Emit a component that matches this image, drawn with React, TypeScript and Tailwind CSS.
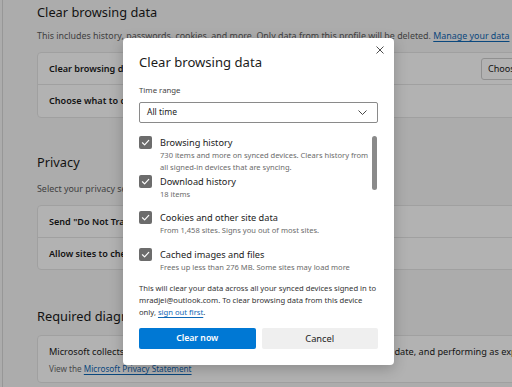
import React from "react";

function Check() {
  return (
    <div className="w-[13px] h-[13px] shrink-0 rounded-[2px] bg-[#6c6c6c] flex items-center justify-center">
      <svg width="9" height="9" viewBox="0 0 10 10" fill="none">
        <path d="M1.6 5.3 L4 7.6 L8.6 2.6" stroke="#fff" strokeWidth="1.3" strokeLinecap="round" strokeLinejoin="round" />
      </svg>
    </div>
  );
}

function Item({ label, desc, className }: { label: string; desc: string[]; className?: string }) {
  return (
    <div className={"flex gap-[8px] " + (className ?? "")}>
      <Check />
      <div>
        <div className="text-[9.2px] leading-[13px] text-[#1b1b1b] whitespace-nowrap">{label}</div>
        {desc.map((d) => (
          <div key={d} className="text-[7.55px] leading-[12px] text-[#6b6b6b] whitespace-nowrap">
            {d}
          </div>
        ))}
      </div>
    </div>
  );
}

export default function App() {
  return (
    <div className="relative w-[512px] h-[387px] overflow-hidden bg-[#f7f7f7] font-['Noto_Sans',sans-serif]">
      {/* page */}
      <div className="flex h-full">
        <div className="w-[3px] shrink-0 border-r border-[#d9d9d9]" />
        <div className="pl-[34px] w-[600px] shrink-0">
          <h1 className="pt-[2px] text-[12.8px] leading-[20px] text-[#1b1b1b]">Clear browsing data</h1>
          <p className="mt-[8px] text-[8.9px] leading-[12px] text-[#5c5c5c] whitespace-nowrap">
            This includes history, passwords, cookies, and more. Only data from this profile will be deleted.{" "}
            <span className="text-[#0f67b5] underline underline-offset-2">Manage your data</span>
          </p>
          <div className="mt-[10px] bg-white rounded-[4px] border border-[#e6e6e6]">
            <div className="h-[32px] flex items-center px-[11px] border-b border-[#e6e6e6]">
              <span className="w-[432px] shrink-0 text-[9.1px] font-semibold text-[#1b1b1b]">Clear browsing data now</span>
              <span className="h-[22px] px-[6px] flex items-center border border-[#cfcfcf] rounded-[3px] text-[9.1px] text-[#1b1b1b] whitespace-nowrap">
                Choose what to clear
              </span>
            </div>
            <div className="h-[32px] flex items-center px-[11px]">
              <span className="text-[9.1px] font-semibold text-[#1b1b1b]">Choose what to clear every time you close the browser</span>
            </div>
          </div>
          <h2 className="mt-[34px] text-[12.8px] leading-[20px] text-[#1b1b1b]">Privacy</h2>
          <p className="mt-[11px] text-[8.9px] leading-[12px] text-[#5c5c5c]">Select your privacy settings for Microsoft Edge</p>
          <div className="mt-[10px] bg-white rounded-[4px] border border-[#e6e6e6]">
            <div className="h-[32px] flex items-center px-[11px] border-b border-[#e6e6e6]">
              <span className="text-[9.1px] font-semibold text-[#1b1b1b]">Send "Do Not Track" requests</span>
            </div>
            <div className="h-[31px] flex items-center px-[11px]">
              <span className="text-[9.1px] font-semibold text-[#1b1b1b]">Allow sites to check if you have payment methods saved</span>
            </div>
          </div>
          <h2 className="mt-[36px] text-[12.8px] leading-[20px] text-[#1b1b1b]">Required diagnostic data</h2>
          <div className="mt-[9px] bg-white rounded-[4px] border border-[#e6e6e6] px-[11px] pt-[9px] pb-[7px]">
            <div className="text-[9.2px] leading-[14px] text-[#1b1b1b] whitespace-nowrap">
              Microsoft collects required diagnostic data to keep Microsoft Edge secure, up to date, and performing as expected
            </div>
            <div className="mt-[4px] text-[8.2px] leading-[12px] text-[#6b6b6b]">
              View the <span className="text-[#0f67b5] underline underline-offset-2">Microsoft Privacy Statement</span>
            </div>
          </div>
        </div>
      </div>

      {/* overlay */}
      <div className="absolute inset-0 bg-black/30" />

      {/* dialog */}
      <div className="absolute left-[123px] top-[38px] w-[271px] h-[327px] bg-white rounded-[4px] shadow-[0_4px_14px_rgba(0,0,0,0.22)] px-[16px]">
        <button className="absolute left-[253px] top-[8px] w-[8px] h-[8px]">
          <svg width="8" height="8" viewBox="0 0 8 8">
            <path d="M0.5 0.5 L7.5 7.5 M7.5 0.5 L0.5 7.5" stroke="#3a3a3a" strokeWidth="0.9" />
          </svg>
        </button>
        <h2 className="pt-[16px] text-[13.1px] leading-[16px] text-[#1b1b1b]">Clear browsing data</h2>
        <div className="mt-[15px] text-[7.8px] leading-[10px] text-[#444]">Time range</div>
        <div className="mt-[7px] h-[21px] border border-[#8a8a8a] rounded-[2px] flex items-center justify-between pl-[7px] pr-[10px]">
          <span className="text-[8.5px] text-[#1b1b1b]">All time</span>
          <svg width="9" height="5" viewBox="0 0 9 5" fill="none">
            <path d="M0.5 0.5 L4.5 4.5 L8.5 0.5" stroke="#333" strokeWidth="0.9" />
          </svg>
        </div>
        <div className="relative mt-[12px] pt-[1px]">
          <div className="absolute left-[233px] top-[1px] w-[5px] h-[54px] rounded-full bg-[#8a8a8a]" />
          <Item label="Browsing history" desc={["730 items and more on synced devices. Clears history from", "all signed-in devices that are syncing."]} />
          <Item className="mt-[2px]" label="Download history" desc={["18 items"]} />
          <Item className="mt-[11px]" label="Cookies and other site data" desc={["From 1,458 sites. Signs you out of most sites."]} />
          <Item className="mt-[12px]" label="Cached images and files" desc={["Frees up less than 276 MB. Some sites may load more"]} />
        </div>
        <p className="mt-[9px] text-[7.65px] leading-[12px] text-[#333] whitespace-nowrap">
          This will clear your data across all your synced devices signed in to
          <br />
          mradjei@outlook.com. To clear browsing data from this device
          <br />
          only, <span className="text-[#0f67b5] underline underline-offset-2">sign out first</span>.
        </p>
        <div className="mt-[10px] flex gap-[6px]">
          <button className="flex-1 h-[21px] rounded-[2px] bg-[#0078d4] text-white text-[8.7px] font-semibold">Clear now</button>
          <button className="flex-1 h-[21px] rounded-[2px] bg-[#efefef] text-[#1b1b1b] text-[9.3px]">Cancel</button>
        </div>
      </div>
    </div>
  );
}
